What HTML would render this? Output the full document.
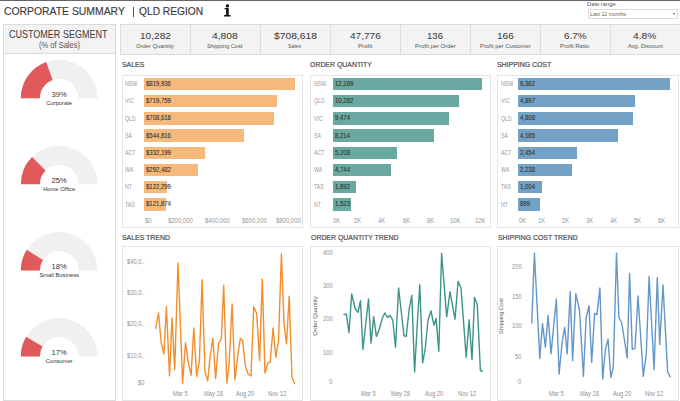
<!DOCTYPE html>
<html><head><meta charset="utf-8"><style>
html,body{margin:0;padding:0;width:680px;height:401px;overflow:hidden;background:#fff;font-family:"Liberation Sans",sans-serif;}
body{position:relative;}
</style></head><body>
<div style="position:absolute;left:0px;top:0px;width:680px;height:1px;background:#666"></div>
<div style="position:absolute;left:4.40px;top:5.52px;font-size:11.19px;line-height:11.19px;white-space:nowrap;color:#3a3a3a;transform:scaleX(0.9287);transform-origin:0 0;-webkit-text-stroke:0.15px #3a3a3a;">CORPORATE SUMMARY</div>
<div style="position:absolute;left:133px;top:6.5px;width:1px;height:10.5px;background:#555"></div>
<div style="position:absolute;left:139.10px;top:5.65px;font-size:11.05px;line-height:11.05px;white-space:nowrap;color:#3a3a3a;transform:scaleX(0.9256);transform-origin:0 0;-webkit-text-stroke:0.15px #3a3a3a;">QLD REGION</div>
<svg style="position:absolute;left:0;top:0" width="240" height="20"><circle cx="227.4" cy="5.9" r="1.7" fill="#111"/><path d="M224.6,8 H228.7 V15 H230.6 V16.4 H224.1 V15 H226.1 V9.2 H224.6 Z" fill="#111"/></svg>
<div style="position:absolute;left:586.60px;top:1.31px;font-size:6.25px;line-height:6.25px;white-space:nowrap;color:#555;transform:scaleX(0.9281);transform-origin:0 0;">Date range</div>
<div style="position:absolute;left:588px;top:9.2px;width:90.4px;height:9.4px;background:#fff;border:1px solid #dadada;box-sizing:border-box"></div>
<div style="position:absolute;left:590.30px;top:11.92px;font-size:5.52px;line-height:5.52px;white-space:nowrap;color:#666;transform:scaleX(0.9532);transform-origin:0 0;">Last 12 months</div>
<div style="position:absolute;left:672.6px;top:13.2px;width:0;height:0;border-left:1.7px solid transparent;border-right:1.7px solid transparent;border-top:2.6px solid #555"></div>
<div style="position:absolute;left:120px;top:24px;width:560px;height:30.5px;background:#f3f3f3;border-top:1px solid #dcdcdc;border-bottom:1px solid #dcdcdc;box-sizing:border-box"></div>
<div style="position:absolute;left:120px;top:24px;width:1px;height:30.5px;background:#dcdcdc"></div>
<div style="position:absolute;left:139.55px;top:31.23px;font-size:9.88px;line-height:9.88px;white-space:nowrap;color:#3c3c3c;transform:scaleX(1.0221);transform-origin:0 0;-webkit-text-stroke:0.05px #3c3c3c;">10,282</div>
<div style="position:absolute;left:135.95px;top:44.08px;font-size:5.81px;line-height:5.81px;white-space:nowrap;color:#555;transform:scaleX(0.9992);transform-origin:0 0;">Order Quantity</div>
<div style="position:absolute;left:190px;top:24px;width:1px;height:30.5px;background:#dcdcdc"></div>
<div style="position:absolute;left:212.10px;top:31.23px;font-size:9.88px;line-height:9.88px;white-space:nowrap;color:#3c3c3c;transform:scaleX(1.0431);transform-origin:0 0;-webkit-text-stroke:0.05px #3c3c3c;">4,808</div>
<div style="position:absolute;left:207.30px;top:44.08px;font-size:5.81px;line-height:5.81px;white-space:nowrap;color:#555;transform:scaleX(0.9779);transform-origin:0 0;">Shipping Cost</div>
<div style="position:absolute;left:260px;top:24px;width:1px;height:30.5px;background:#dcdcdc"></div>
<div style="position:absolute;left:273.55px;top:31.23px;font-size:9.88px;line-height:9.88px;white-space:nowrap;color:#3c3c3c;transform:scaleX(1.0406);transform-origin:0 0;-webkit-text-stroke:0.05px #3c3c3c;">$708,618</div>
<div style="position:absolute;left:288.40px;top:44.08px;font-size:5.81px;line-height:5.81px;white-space:nowrap;color:#555;transform:scaleX(0.9076);transform-origin:0 0;">Sales</div>
<div style="position:absolute;left:330px;top:24px;width:1px;height:30.5px;background:#dcdcdc"></div>
<div style="position:absolute;left:349.60px;top:31.23px;font-size:9.88px;line-height:9.88px;white-space:nowrap;color:#3c3c3c;transform:scaleX(1.0188);transform-origin:0 0;-webkit-text-stroke:0.05px #3c3c3c;">47,776</div>
<div style="position:absolute;left:357.80px;top:44.08px;font-size:5.81px;line-height:5.81px;white-space:nowrap;color:#555;transform:scaleX(1.0611);transform-origin:0 0;">Profit</div>
<div style="position:absolute;left:400px;top:24px;width:1px;height:30.5px;background:#dcdcdc"></div>
<div style="position:absolute;left:427.00px;top:31.23px;font-size:9.88px;line-height:9.88px;white-space:nowrap;color:#3c3c3c;transform:scaleX(0.9702);transform-origin:0 0;-webkit-text-stroke:0.05px #3c3c3c;">136</div>
<div style="position:absolute;left:414.60px;top:44.08px;font-size:5.81px;line-height:5.81px;white-space:nowrap;color:#555;transform:scaleX(1.0183);transform-origin:0 0;">Profit per Order</div>
<div style="position:absolute;left:470px;top:24px;width:1px;height:30.5px;background:#dcdcdc"></div>
<div style="position:absolute;left:496.60px;top:31.23px;font-size:9.88px;line-height:9.88px;white-space:nowrap;color:#3c3c3c;transform:scaleX(1.0187);transform-origin:0 0;-webkit-text-stroke:0.05px #3c3c3c;">166</div>
<div style="position:absolute;left:479.60px;top:44.08px;font-size:5.81px;line-height:5.81px;white-space:nowrap;color:#555;transform:scaleX(1.0078);transform-origin:0 0;">Profit per Customer</div>
<div style="position:absolute;left:540px;top:24px;width:1px;height:30.5px;background:#dcdcdc"></div>
<div style="position:absolute;left:563.70px;top:31.23px;font-size:9.88px;line-height:9.88px;white-space:nowrap;color:#3c3c3c;transform:scaleX(1.0032);transform-origin:0 0;-webkit-text-stroke:0.05px #3c3c3c;">6.7%</div>
<div style="position:absolute;left:560.40px;top:44.08px;font-size:5.81px;line-height:5.81px;white-space:nowrap;color:#555;transform:scaleX(1.0153);transform-origin:0 0;">Profit Ratio</div>
<div style="position:absolute;left:610px;top:24px;width:1px;height:30.5px;background:#dcdcdc"></div>
<div style="position:absolute;left:633.40px;top:31.23px;font-size:9.88px;line-height:9.88px;white-space:nowrap;color:#3c3c3c;transform:scaleX(1.0298);transform-origin:0 0;-webkit-text-stroke:0.05px #3c3c3c;">4.8%</div>
<div style="position:absolute;left:627.50px;top:44.08px;font-size:5.81px;line-height:5.81px;white-space:nowrap;color:#555;transform:scaleX(0.9786);transform-origin:0 0;">Avg. Discount</div>
<div style="position:absolute;left:2.5px;top:24px;width:113.5px;height:376.5px;border:1px solid #dcdcdc;box-sizing:border-box;background:#fff"></div>
<div style="position:absolute;left:2.5px;top:24px;width:113.5px;height:29.5px;background:#f3f3f3;border:1px solid #dcdcdc;box-sizing:border-box"></div>
<div style="position:absolute;left:8.50px;top:29.79px;font-size:10.17px;line-height:10.17px;white-space:nowrap;color:#3a3a3a;transform:scaleX(0.8869);transform-origin:0 0;">CUSTOMER SEGMENT</div>
<div style="position:absolute;left:38.80px;top:41.16px;font-size:8.43px;line-height:8.43px;white-space:nowrap;color:#555;transform:scaleX(0.8929);transform-origin:0 0;">(% of Sales)</div>
<svg style="position:absolute;left:0;top:0" width="120" height="401"><path d="M20.800000000000004,98.2 A38.4,38.4 0 0 1 97.6,98.2 L78.5,98.2 A19.3,19.3 0 0 0 39.900000000000006,98.2 Z" fill="#f0f0f0"/><path d="M20.800000000000004,98.2 A38.4,38.4 0 0 1 46.19,62.07 L52.66,80.04 A19.3,19.3 0 0 0 39.900000000000006,98.2 Z" fill="#e05a5c"/><path d="M20.800000000000004,184.2 A38.4,38.4 0 0 1 97.6,184.2 L78.5,184.2 A19.3,19.3 0 0 0 39.900000000000006,184.2 Z" fill="#f0f0f0"/><path d="M20.800000000000004,184.2 A38.4,38.4 0 0 1 32.05,157.05 L45.55,170.55 A19.3,19.3 0 0 0 39.900000000000006,184.2 Z" fill="#e05a5c"/><path d="M20.800000000000004,270.4 A38.4,38.4 0 0 1 97.6,270.4 L78.5,270.4 A19.3,19.3 0 0 0 39.900000000000006,270.4 Z" fill="#f0f0f0"/><path d="M20.800000000000004,270.4 A38.4,38.4 0 0 1 26.78,249.82 L42.90,260.06 A19.3,19.3 0 0 0 39.900000000000006,270.4 Z" fill="#e05a5c"/><path d="M20.800000000000004,356.4 A38.4,38.4 0 0 1 97.6,356.4 L78.5,356.4 A19.3,19.3 0 0 0 39.900000000000006,356.4 Z" fill="#f0f0f0"/><path d="M20.800000000000004,356.4 A38.4,38.4 0 0 1 26.15,336.85 L42.59,346.58 A19.3,19.3 0 0 0 39.900000000000006,356.4 Z" fill="#e05a5c"/></svg>
<div style="position:absolute;left:51.59px;top:91.17px;font-size:7.60px;line-height:7.60px;white-space:nowrap;color:#333;transform:scaleX(1.0000);transform-origin:0 0;">39%</div>
<div style="position:absolute;left:46.30px;top:100.99px;font-size:5.80px;line-height:5.80px;white-space:nowrap;color:#333;transform:scaleX(1.0000);transform-origin:0 0;">Corporate</div>
<div style="position:absolute;left:51.59px;top:177.17px;font-size:7.60px;line-height:7.60px;white-space:nowrap;color:#333;transform:scaleX(1.0000);transform-origin:0 0;">25%</div>
<div style="position:absolute;left:43.14px;top:186.99px;font-size:5.80px;line-height:5.80px;white-space:nowrap;color:#333;transform:scaleX(1.0000);transform-origin:0 0;">Home Office</div>
<div style="position:absolute;left:51.59px;top:263.37px;font-size:7.60px;line-height:7.60px;white-space:nowrap;color:#333;transform:scaleX(1.0000);transform-origin:0 0;">18%</div>
<div style="position:absolute;left:39.38px;top:273.19px;font-size:5.80px;line-height:5.80px;white-space:nowrap;color:#333;transform:scaleX(1.0000);transform-origin:0 0;">Small Business</div>
<div style="position:absolute;left:51.59px;top:349.37px;font-size:7.60px;line-height:7.60px;white-space:nowrap;color:#333;transform:scaleX(1.0000);transform-origin:0 0;">17%</div>
<div style="position:absolute;left:45.82px;top:359.19px;font-size:5.80px;line-height:5.80px;white-space:nowrap;color:#333;transform:scaleX(1.0000);transform-origin:0 0;">Consumer</div>
<div style="position:absolute;left:121.80px;top:60.88px;font-size:7.70px;line-height:7.70px;white-space:nowrap;color:#505050;transform:scaleX(0.9000);transform-origin:0 0;-webkit-text-stroke:0.22px #505050;">SALES</div>
<div style="position:absolute;left:121.5px;top:74.6px;width:181px;height:153.2px;border:1px solid #e4e4e4;box-sizing:border-box"></div>
<div style="position:absolute;left:144.0px;top:77.7px;width:151.0px;height:12.5px;background:#f6b97c"></div>
<div style="position:absolute;left:125.00px;top:81.28px;font-size:6.40px;line-height:6.40px;white-space:nowrap;color:#9a9a9a;transform:scaleX(0.8200);transform-origin:0 0;">NSW</div>
<div style="position:absolute;left:146.00px;top:80.94px;font-size:6.80px;line-height:6.80px;white-space:nowrap;color:#333;transform:scaleX(0.8800);transform-origin:0 0;-webkit-text-stroke:0.1px #333;">$819,936</div>
<div style="position:absolute;left:144.0px;top:94.9px;width:132.55133205518482px;height:12.5px;background:#f6b97c"></div>
<div style="position:absolute;left:125.00px;top:98.48px;font-size:6.40px;line-height:6.40px;white-space:nowrap;color:#9a9a9a;transform:scaleX(0.8200);transform-origin:0 0;">VIC</div>
<div style="position:absolute;left:146.00px;top:98.14px;font-size:6.80px;line-height:6.80px;white-space:nowrap;color:#333;transform:scaleX(0.8800);transform-origin:0 0;-webkit-text-stroke:0.1px #333;">$719,759</div>
<div style="position:absolute;left:144.0px;top:112.1px;width:130.4995975295633px;height:12.5px;background:#f6b97c"></div>
<div style="position:absolute;left:125.00px;top:115.68px;font-size:6.40px;line-height:6.40px;white-space:nowrap;color:#9a9a9a;transform:scaleX(0.8200);transform-origin:0 0;">QLD</div>
<div style="position:absolute;left:146.00px;top:115.34px;font-size:6.80px;line-height:6.80px;white-space:nowrap;color:#333;transform:scaleX(0.8800);transform-origin:0 0;-webkit-text-stroke:0.1px #333;">$708,618</div>
<div style="position:absolute;left:144.0px;top:129.3px;width:100.33370409397807px;height:12.5px;background:#f6b97c"></div>
<div style="position:absolute;left:125.00px;top:132.88px;font-size:6.40px;line-height:6.40px;white-space:nowrap;color:#9a9a9a;transform:scaleX(0.8200);transform-origin:0 0;">SA</div>
<div style="position:absolute;left:146.00px;top:132.54px;font-size:6.80px;line-height:6.80px;white-space:nowrap;color:#333;transform:scaleX(0.8800);transform-origin:0 0;-webkit-text-stroke:0.1px #333;">$544,816</div>
<div style="position:absolute;left:144.0px;top:146.5px;width:61.178005356515634px;height:12.5px;background:#f6b97c"></div>
<div style="position:absolute;left:125.00px;top:150.08px;font-size:6.40px;line-height:6.40px;white-space:nowrap;color:#9a9a9a;transform:scaleX(0.8200);transform-origin:0 0;">ACT</div>
<div style="position:absolute;left:146.00px;top:149.74px;font-size:6.80px;line-height:6.80px;white-space:nowrap;color:#333;transform:scaleX(0.8800);transform-origin:0 0;-webkit-text-stroke:0.1px #333;">$332,199</div>
<div style="position:absolute;left:144.0px;top:163.7px;width:53.863694239550405px;height:12.5px;background:#f6b97c"></div>
<div style="position:absolute;left:125.00px;top:167.28px;font-size:6.40px;line-height:6.40px;white-space:nowrap;color:#9a9a9a;transform:scaleX(0.8200);transform-origin:0 0;">WA</div>
<div style="position:absolute;left:146.00px;top:166.94px;font-size:6.80px;line-height:6.80px;white-space:nowrap;color:#333;transform:scaleX(0.8800);transform-origin:0 0;-webkit-text-stroke:0.1px #333;">$292,482</div>
<div style="position:absolute;left:144.0px;top:180.89999999999998px;width:22.522671281661008px;height:12.5px;background:#f6b97c"></div>
<div style="position:absolute;left:125.00px;top:184.48px;font-size:6.40px;line-height:6.40px;white-space:nowrap;color:#9a9a9a;transform:scaleX(0.8200);transform-origin:0 0;">NT</div>
<div style="position:absolute;left:146.00px;top:184.14px;font-size:6.80px;line-height:6.80px;white-space:nowrap;color:#333;transform:scaleX(0.8800);transform-origin:0 0;-webkit-text-stroke:0.1px #333;">$122,299</div>
<div style="position:absolute;left:144.0px;top:198.1px;width:22.44440297779339px;height:12.5px;background:#f6b97c"></div>
<div style="position:absolute;left:125.00px;top:201.68px;font-size:6.40px;line-height:6.40px;white-space:nowrap;color:#9a9a9a;transform:scaleX(0.8200);transform-origin:0 0;">TAS</div>
<div style="position:absolute;left:146.00px;top:201.34px;font-size:6.80px;line-height:6.80px;white-space:nowrap;color:#333;transform:scaleX(0.8800);transform-origin:0 0;-webkit-text-stroke:0.1px #333;">$121,874</div>
<div style="position:absolute;left:144.50px;top:217.61px;font-size:6.60px;line-height:6.60px;white-space:nowrap;color:#959595;transform:scaleX(0.9000);transform-origin:0 0;">$0</div>
<div style="position:absolute;left:168.44px;top:217.61px;font-size:6.60px;line-height:6.60px;white-space:nowrap;color:#959595;transform:scaleX(0.9000);transform-origin:0 0;">$200,000</div>
<div style="position:absolute;left:205.28px;top:217.61px;font-size:6.60px;line-height:6.60px;white-space:nowrap;color:#959595;transform:scaleX(0.9000);transform-origin:0 0;">$400,000</div>
<div style="position:absolute;left:242.11px;top:217.61px;font-size:6.60px;line-height:6.60px;white-space:nowrap;color:#959595;transform:scaleX(0.9000);transform-origin:0 0;">$600,000</div>
<div style="position:absolute;left:275.72px;top:217.61px;font-size:6.60px;line-height:6.60px;white-space:nowrap;color:#959595;transform:scaleX(0.9000);transform-origin:0 0;">$800,000</div>
<div style="position:absolute;left:310.30px;top:60.88px;font-size:7.70px;line-height:7.70px;white-space:nowrap;color:#505050;transform:scaleX(0.9000);transform-origin:0 0;-webkit-text-stroke:0.22px #505050;">ORDER QUANTITY</div>
<div style="position:absolute;left:310px;top:74.6px;width:181px;height:153.2px;border:1px solid #e4e4e4;box-sizing:border-box"></div>
<div style="position:absolute;left:332.6px;top:77.7px;width:149.8px;height:12.5px;background:#6aa9a2"></div>
<div style="position:absolute;left:313.50px;top:81.28px;font-size:6.40px;line-height:6.40px;white-space:nowrap;color:#9a9a9a;transform:scaleX(0.8200);transform-origin:0 0;">NSW</div>
<div style="position:absolute;left:334.60px;top:80.94px;font-size:6.80px;line-height:6.80px;white-space:nowrap;color:#333;transform:scaleX(0.8800);transform-origin:0 0;-webkit-text-stroke:0.1px #333;">12,169</div>
<div style="position:absolute;left:332.6px;top:94.9px;width:126.57109047579917px;height:12.5px;background:#6aa9a2"></div>
<div style="position:absolute;left:313.50px;top:98.48px;font-size:6.40px;line-height:6.40px;white-space:nowrap;color:#9a9a9a;transform:scaleX(0.8200);transform-origin:0 0;">QLD</div>
<div style="position:absolute;left:334.60px;top:98.14px;font-size:6.80px;line-height:6.80px;white-space:nowrap;color:#333;transform:scaleX(0.8800);transform-origin:0 0;-webkit-text-stroke:0.1px #333;">10,282</div>
<div style="position:absolute;left:332.6px;top:112.1px;width:116.62463637110692px;height:12.5px;background:#6aa9a2"></div>
<div style="position:absolute;left:313.50px;top:115.68px;font-size:6.40px;line-height:6.40px;white-space:nowrap;color:#9a9a9a;transform:scaleX(0.8200);transform-origin:0 0;">VIC</div>
<div style="position:absolute;left:334.60px;top:115.34px;font-size:6.80px;line-height:6.80px;white-space:nowrap;color:#333;transform:scaleX(0.8800);transform-origin:0 0;-webkit-text-stroke:0.1px #333;">9,474</div>
<div style="position:absolute;left:332.6px;top:129.3px;width:101.11407675240365px;height:12.5px;background:#6aa9a2"></div>
<div style="position:absolute;left:313.50px;top:132.88px;font-size:6.40px;line-height:6.40px;white-space:nowrap;color:#9a9a9a;transform:scaleX(0.8200);transform-origin:0 0;">SA</div>
<div style="position:absolute;left:334.60px;top:132.54px;font-size:6.80px;line-height:6.80px;white-space:nowrap;color:#333;transform:scaleX(0.8800);transform-origin:0 0;-webkit-text-stroke:0.1px #333;">8,214</div>
<div style="position:absolute;left:332.6px;top:146.5px;width:64.11031309064015px;height:12.5px;background:#6aa9a2"></div>
<div style="position:absolute;left:313.50px;top:150.08px;font-size:6.40px;line-height:6.40px;white-space:nowrap;color:#9a9a9a;transform:scaleX(0.8200);transform-origin:0 0;">ACT</div>
<div style="position:absolute;left:334.60px;top:149.74px;font-size:6.80px;line-height:6.80px;white-space:nowrap;color:#333;transform:scaleX(0.8800);transform-origin:0 0;-webkit-text-stroke:0.1px #333;">5,208</div>
<div style="position:absolute;left:332.6px;top:163.7px;width:58.39848796121292px;height:12.5px;background:#6aa9a2"></div>
<div style="position:absolute;left:313.50px;top:167.28px;font-size:6.40px;line-height:6.40px;white-space:nowrap;color:#9a9a9a;transform:scaleX(0.8200);transform-origin:0 0;">WA</div>
<div style="position:absolute;left:334.60px;top:166.94px;font-size:6.80px;line-height:6.80px;white-space:nowrap;color:#333;transform:scaleX(0.8800);transform-origin:0 0;-webkit-text-stroke:0.1px #333;">4,744</div>
<div style="position:absolute;left:332.6px;top:180.89999999999998px;width:23.2904593639576px;height:12.5px;background:#6aa9a2"></div>
<div style="position:absolute;left:313.50px;top:184.48px;font-size:6.40px;line-height:6.40px;white-space:nowrap;color:#9a9a9a;transform:scaleX(0.8200);transform-origin:0 0;">TAS</div>
<div style="position:absolute;left:334.60px;top:184.14px;font-size:6.80px;line-height:6.80px;white-space:nowrap;color:#333;transform:scaleX(0.8800);transform-origin:0 0;-webkit-text-stroke:0.1px #333;">1,892</div>
<div style="position:absolute;left:332.6px;top:198.1px;width:18.748081189908785px;height:12.5px;background:#6aa9a2"></div>
<div style="position:absolute;left:313.50px;top:201.68px;font-size:6.40px;line-height:6.40px;white-space:nowrap;color:#9a9a9a;transform:scaleX(0.8200);transform-origin:0 0;">NT</div>
<div style="position:absolute;left:334.60px;top:201.34px;font-size:6.80px;line-height:6.80px;white-space:nowrap;color:#333;transform:scaleX(0.8800);transform-origin:0 0;-webkit-text-stroke:0.1px #333;">1,523</div>
<div style="position:absolute;left:333.10px;top:217.61px;font-size:6.60px;line-height:6.60px;white-space:nowrap;color:#959595;transform:scaleX(0.9000);transform-origin:0 0;">0K</div>
<div style="position:absolute;left:353.59px;top:217.61px;font-size:6.60px;line-height:6.60px;white-space:nowrap;color:#959595;transform:scaleX(0.9000);transform-origin:0 0;">2K</div>
<div style="position:absolute;left:378.21px;top:217.61px;font-size:6.60px;line-height:6.60px;white-space:nowrap;color:#959595;transform:scaleX(0.9000);transform-origin:0 0;">4K</div>
<div style="position:absolute;left:402.83px;top:217.61px;font-size:6.60px;line-height:6.60px;white-space:nowrap;color:#959595;transform:scaleX(0.9000);transform-origin:0 0;">6K</div>
<div style="position:absolute;left:427.45px;top:217.61px;font-size:6.60px;line-height:6.60px;white-space:nowrap;color:#959595;transform:scaleX(0.9000);transform-origin:0 0;">8K</div>
<div style="position:absolute;left:450.41px;top:217.61px;font-size:6.60px;line-height:6.60px;white-space:nowrap;color:#959595;transform:scaleX(0.9000);transform-origin:0 0;">10K</div>
<div style="position:absolute;left:475.03px;top:217.61px;font-size:6.60px;line-height:6.60px;white-space:nowrap;color:#959595;transform:scaleX(0.9000);transform-origin:0 0;">12K</div>
<div style="position:absolute;left:497.30px;top:60.88px;font-size:7.70px;line-height:7.70px;white-space:nowrap;color:#505050;transform:scaleX(0.9000);transform-origin:0 0;-webkit-text-stroke:0.22px #505050;">SHIPPING COST</div>
<div style="position:absolute;left:497px;top:74.6px;width:182px;height:153.2px;border:1px solid #e4e4e4;box-sizing:border-box"></div>
<div style="position:absolute;left:518.0px;top:77.7px;width:152.2px;height:12.5px;background:#74a2c7"></div>
<div style="position:absolute;left:500.50px;top:81.28px;font-size:6.40px;line-height:6.40px;white-space:nowrap;color:#9a9a9a;transform:scaleX(0.8200);transform-origin:0 0;">NSW</div>
<div style="position:absolute;left:520.00px;top:80.94px;font-size:6.80px;line-height:6.80px;white-space:nowrap;color:#333;transform:scaleX(0.8800);transform-origin:0 0;-webkit-text-stroke:0.1px #333;">6,362</div>
<div style="position:absolute;left:518.0px;top:94.9px;width:117.15237346746305px;height:12.5px;background:#74a2c7"></div>
<div style="position:absolute;left:500.50px;top:98.48px;font-size:6.40px;line-height:6.40px;white-space:nowrap;color:#9a9a9a;transform:scaleX(0.8200);transform-origin:0 0;">VIC</div>
<div style="position:absolute;left:520.00px;top:98.14px;font-size:6.80px;line-height:6.80px;white-space:nowrap;color:#333;transform:scaleX(0.8800);transform-origin:0 0;-webkit-text-stroke:0.1px #333;">4,897</div>
<div style="position:absolute;left:518.0px;top:112.1px;width:115.02320025149324px;height:12.5px;background:#74a2c7"></div>
<div style="position:absolute;left:500.50px;top:115.68px;font-size:6.40px;line-height:6.40px;white-space:nowrap;color:#9a9a9a;transform:scaleX(0.8200);transform-origin:0 0;">QLD</div>
<div style="position:absolute;left:520.00px;top:115.34px;font-size:6.80px;line-height:6.80px;white-space:nowrap;color:#333;transform:scaleX(0.8800);transform-origin:0 0;-webkit-text-stroke:0.1px #333;">4,808</div>
<div style="position:absolute;left:518.0px;top:129.3px;width:100.11898773970448px;height:12.5px;background:#74a2c7"></div>
<div style="position:absolute;left:500.50px;top:132.88px;font-size:6.40px;line-height:6.40px;white-space:nowrap;color:#9a9a9a;transform:scaleX(0.8200);transform-origin:0 0;">SA</div>
<div style="position:absolute;left:520.00px;top:132.54px;font-size:6.80px;line-height:6.80px;white-space:nowrap;color:#333;transform:scaleX(0.8800);transform-origin:0 0;-webkit-text-stroke:0.1px #333;">4,185</div>
<div style="position:absolute;left:518.0px;top:146.5px;width:58.70776485381955px;height:12.5px;background:#74a2c7"></div>
<div style="position:absolute;left:500.50px;top:150.08px;font-size:6.40px;line-height:6.40px;white-space:nowrap;color:#9a9a9a;transform:scaleX(0.8200);transform-origin:0 0;">ACT</div>
<div style="position:absolute;left:520.00px;top:149.74px;font-size:6.80px;line-height:6.80px;white-space:nowrap;color:#333;transform:scaleX(0.8800);transform-origin:0 0;-webkit-text-stroke:0.1px #333;">2,454</div>
<div style="position:absolute;left:518.0px;top:163.7px;width:53.540333228544476px;height:12.5px;background:#74a2c7"></div>
<div style="position:absolute;left:500.50px;top:167.28px;font-size:6.40px;line-height:6.40px;white-space:nowrap;color:#9a9a9a;transform:scaleX(0.8200);transform-origin:0 0;">WA</div>
<div style="position:absolute;left:520.00px;top:166.94px;font-size:6.80px;line-height:6.80px;white-space:nowrap;color:#333;transform:scaleX(0.8800);transform-origin:0 0;-webkit-text-stroke:0.1px #333;">2,238</div>
<div style="position:absolute;left:518.0px;top:180.89999999999998px;width:24.018987739704492px;height:12.5px;background:#74a2c7"></div>
<div style="position:absolute;left:500.50px;top:184.48px;font-size:6.40px;line-height:6.40px;white-space:nowrap;color:#9a9a9a;transform:scaleX(0.8200);transform-origin:0 0;">TAS</div>
<div style="position:absolute;left:520.00px;top:184.14px;font-size:6.80px;line-height:6.80px;white-space:nowrap;color:#333;transform:scaleX(0.8800);transform-origin:0 0;-webkit-text-stroke:0.1px #333;">1,004</div>
<div style="position:absolute;left:518.0px;top:198.1px;width:21.507041810751335px;height:12.5px;background:#74a2c7"></div>
<div style="position:absolute;left:500.50px;top:201.68px;font-size:6.40px;line-height:6.40px;white-space:nowrap;color:#9a9a9a;transform:scaleX(0.8200);transform-origin:0 0;">NT</div>
<div style="position:absolute;left:520.00px;top:201.34px;font-size:6.80px;line-height:6.80px;white-space:nowrap;color:#333;transform:scaleX(0.8800);transform-origin:0 0;-webkit-text-stroke:0.1px #333;">899</div>
<div style="position:absolute;left:518.50px;top:217.61px;font-size:6.60px;line-height:6.60px;white-space:nowrap;color:#959595;transform:scaleX(0.9000);transform-origin:0 0;">0K</div>
<div style="position:absolute;left:538.29px;top:217.61px;font-size:6.60px;line-height:6.60px;white-space:nowrap;color:#959595;transform:scaleX(0.9000);transform-origin:0 0;">1K</div>
<div style="position:absolute;left:562.21px;top:217.61px;font-size:6.60px;line-height:6.60px;white-space:nowrap;color:#959595;transform:scaleX(0.9000);transform-origin:0 0;">2K</div>
<div style="position:absolute;left:586.14px;top:217.61px;font-size:6.60px;line-height:6.60px;white-space:nowrap;color:#959595;transform:scaleX(0.9000);transform-origin:0 0;">3K</div>
<div style="position:absolute;left:610.06px;top:217.61px;font-size:6.60px;line-height:6.60px;white-space:nowrap;color:#959595;transform:scaleX(0.9000);transform-origin:0 0;">4K</div>
<div style="position:absolute;left:633.98px;top:217.61px;font-size:6.60px;line-height:6.60px;white-space:nowrap;color:#959595;transform:scaleX(0.9000);transform-origin:0 0;">5K</div>
<div style="position:absolute;left:657.91px;top:217.61px;font-size:6.60px;line-height:6.60px;white-space:nowrap;color:#959595;transform:scaleX(0.9000);transform-origin:0 0;">6K</div>
<div style="position:absolute;left:122.00px;top:233.58px;font-size:7.70px;line-height:7.70px;white-space:nowrap;color:#505050;transform:scaleX(0.9000);transform-origin:0 0;-webkit-text-stroke:0.22px #505050;">SALES TREND</div>
<div style="position:absolute;left:121.5px;top:246.0px;width:181px;height:155.0px;border:1px solid #e4e4e4;box-sizing:border-box"></div>
<div style="position:absolute;left:310.50px;top:233.58px;font-size:7.70px;line-height:7.70px;white-space:nowrap;color:#505050;transform:scaleX(0.9000);transform-origin:0 0;-webkit-text-stroke:0.22px #505050;">ORDER QUANTITY TREND</div>
<div style="position:absolute;left:310px;top:246.0px;width:181px;height:155.0px;border:1px solid #e4e4e4;box-sizing:border-box"></div>
<div style="position:absolute;left:497.50px;top:233.58px;font-size:7.70px;line-height:7.70px;white-space:nowrap;color:#505050;transform:scaleX(0.9000);transform-origin:0 0;-webkit-text-stroke:0.22px #505050;">SHIPPING COST TREND</div>
<div style="position:absolute;left:497px;top:246.0px;width:182px;height:155.0px;border:1px solid #e4e4e4;box-sizing:border-box"></div>
<svg style="position:absolute;left:0;top:0" width="680" height="401"><polyline points="155.6,329.2 158.5,313 161.2,342.7 163.9,353.9 166.4,306.7 169.5,375.9 172,318 174.7,369.6 178,263 182.6,383.5 185.5,342.7 188.2,361.8 191.1,375.2 193.8,328 196.7,376.4 199.4,360.6 202.1,279.8 205,371.9 207.7,380.8 210.2,356.1 212.9,338.2 215.6,378.6 218.5,343.8 221.4,338.2 223.7,285.3 226.8,383.1 229,365.1 232.1,304 234.9,379.7 237.6,357.3 240.3,338.2 242.7,340.4 245.4,366.2 248.1,374.1 251,375.9 253.7,306.7 256.7,313.5 259.6,360.6 262.3,279.1 265,373 267.9,362.9 270.1,362.4 273.1,328 275.8,357.3 278.5,341.5 281.4,254 284.1,324.7 286.5,343.8 289.2,296.3 292,377.5 294.8,384.2" fill="none" stroke="#f28e2b" stroke-width="1.4" stroke-linejoin="round"/><polyline points="343.4,314.6 346.3,313.9 349,332.6 351.7,294 355.3,309 358,312.4 360.5,300.6 362.9,349.4 368.5,299 371,343.1 373.7,316.8 376.4,336.4 379.3,329.2 382.2,318.4 384.9,313 387.6,317.5 389.9,315.3 392.8,320.2 395.5,347.2 398.6,288 404,335.9 406.2,336.4 409.2,309 411.8,295.3 414.6,371.9 417.5,320.2 419.8,284.7 422.6,362.9 425.3,348.3 428,320.2 431,310.8 433.9,325.2 436.1,318.4 438.8,351.2 441.6,253.4 446.7,316.8 450,291.8 455,319.1 458.1,281.4 461,288 466.2,357.3 469.1,319.8 472,359.5 474.5,297.5 477.3,304.6 480.4,370.7 483,371.4" fill="none" stroke="#3d948a" stroke-width="1.4" stroke-linejoin="round"/><polyline points="531.7,323.6 534.4,253.3 539.8,358.4 542.5,323.6 545.4,347.2 548.1,315.3 551,353.9 556.3,299 559.1,374.1 562.1,342.7 564.7,327.4 567.2,353.9 570.2,291.5 572.6,360.6 575.8,293.7 579.5,310 583.4,376.4 586.1,318 589,305.6 591.7,362.4 594.6,313.5 596.9,314.6 599.9,288 602.7,379 605.4,349.4 608.1,339.3 610.8,377.5 613.3,367.4 616.5,253.3 618.9,317.5 621.6,322.5 624.5,340.4 627.2,357.9 629.6,273.2 632.3,349.4 635,348.3 638,295.9 643.3,376.4 646.3,353.9 649.1,276.5 654.1,369.6 657.3,277.6 659.7,344.5 663,284.9 667.6,371.4 670.5,377.5" fill="none" stroke="#6497c9" stroke-width="1.4" stroke-linejoin="round"/></svg>
<div style="position:absolute;left:126.60px;top:257.60px;font-size:7.20px;line-height:7.20px;white-space:nowrap;color:#8f8f8f;transform:scaleX(0.8000);transform-origin:0 0;">$40,0..</div>
<div style="position:absolute;left:126.60px;top:289.00px;font-size:7.20px;line-height:7.20px;white-space:nowrap;color:#8f8f8f;transform:scaleX(0.8000);transform-origin:0 0;">$30,0..</div>
<div style="position:absolute;left:126.60px;top:319.70px;font-size:7.20px;line-height:7.20px;white-space:nowrap;color:#8f8f8f;transform:scaleX(0.8000);transform-origin:0 0;">$20,0..</div>
<div style="position:absolute;left:126.60px;top:351.60px;font-size:7.20px;line-height:7.20px;white-space:nowrap;color:#8f8f8f;transform:scaleX(0.8000);transform-origin:0 0;">$10,0..</div>
<div style="position:absolute;left:138.19px;top:378.50px;font-size:7.20px;line-height:7.20px;white-space:nowrap;color:#8f8f8f;transform:scaleX(0.8000);transform-origin:0 0;">$0</div>
<div style="position:absolute;left:322.99px;top:249.20px;font-size:7.20px;line-height:7.20px;white-space:nowrap;color:#8f8f8f;transform:scaleX(0.8000);transform-origin:0 0;">400</div>
<div style="position:absolute;left:322.99px;top:282.30px;font-size:7.20px;line-height:7.20px;white-space:nowrap;color:#8f8f8f;transform:scaleX(0.8000);transform-origin:0 0;">300</div>
<div style="position:absolute;left:322.99px;top:315.40px;font-size:7.20px;line-height:7.20px;white-space:nowrap;color:#8f8f8f;transform:scaleX(0.8000);transform-origin:0 0;">200</div>
<div style="position:absolute;left:322.99px;top:348.90px;font-size:7.20px;line-height:7.20px;white-space:nowrap;color:#8f8f8f;transform:scaleX(0.8000);transform-origin:0 0;">100</div>
<div style="position:absolute;left:329.40px;top:378.10px;font-size:7.20px;line-height:7.20px;white-space:nowrap;color:#8f8f8f;transform:scaleX(0.8000);transform-origin:0 0;">0</div>
<div style="position:absolute;left:511.69px;top:263.10px;font-size:7.20px;line-height:7.20px;white-space:nowrap;color:#8f8f8f;transform:scaleX(0.8000);transform-origin:0 0;">200</div>
<div style="position:absolute;left:511.69px;top:293.10px;font-size:7.20px;line-height:7.20px;white-space:nowrap;color:#8f8f8f;transform:scaleX(0.8000);transform-origin:0 0;">150</div>
<div style="position:absolute;left:511.69px;top:322.20px;font-size:7.20px;line-height:7.20px;white-space:nowrap;color:#8f8f8f;transform:scaleX(0.8000);transform-origin:0 0;">100</div>
<div style="position:absolute;left:514.89px;top:352.90px;font-size:7.20px;line-height:7.20px;white-space:nowrap;color:#8f8f8f;transform:scaleX(0.8000);transform-origin:0 0;">50</div>
<div style="position:absolute;left:518.10px;top:378.10px;font-size:7.20px;line-height:7.20px;white-space:nowrap;color:#8f8f8f;transform:scaleX(0.8000);transform-origin:0 0;">0</div>
<div style="position:absolute;left:314.8px;top:315.6px;font-size:6.0px;line-height:6.0px;color:#555;white-space:nowrap;transform:translate(-50%,-50%) rotate(-90deg)">Order Quantity</div>
<div style="position:absolute;left:502.4px;top:315.5px;font-size:5.75px;line-height:5.75px;color:#555;white-space:nowrap;transform:translate(-50%,-50%) rotate(-90deg)">Shipping Cost</div>
<div style="position:absolute;left:172.84px;top:389.80px;font-size:7.20px;line-height:7.20px;white-space:nowrap;color:#8f8f8f;transform:scaleX(0.8000);transform-origin:0 0;">Mar 5</div>
<div style="position:absolute;left:203.56px;top:389.80px;font-size:7.20px;line-height:7.20px;white-space:nowrap;color:#8f8f8f;transform:scaleX(0.8000);transform-origin:0 0;">May 28</div>
<div style="position:absolute;left:235.87px;top:389.80px;font-size:7.20px;line-height:7.20px;white-space:nowrap;color:#8f8f8f;transform:scaleX(0.8000);transform-origin:0 0;">Aug 20</div>
<div style="position:absolute;left:268.37px;top:389.80px;font-size:7.20px;line-height:7.20px;white-space:nowrap;color:#8f8f8f;transform:scaleX(0.8000);transform-origin:0 0;">Nov 12</div>
<div style="position:absolute;left:360.64px;top:389.80px;font-size:7.20px;line-height:7.20px;white-space:nowrap;color:#8f8f8f;transform:scaleX(0.8000);transform-origin:0 0;">Mar 5</div>
<div style="position:absolute;left:391.46px;top:389.80px;font-size:7.20px;line-height:7.20px;white-space:nowrap;color:#8f8f8f;transform:scaleX(0.8000);transform-origin:0 0;">May 28</div>
<div style="position:absolute;left:424.67px;top:389.80px;font-size:7.20px;line-height:7.20px;white-space:nowrap;color:#8f8f8f;transform:scaleX(0.8000);transform-origin:0 0;">Aug 20</div>
<div style="position:absolute;left:457.57px;top:389.80px;font-size:7.20px;line-height:7.20px;white-space:nowrap;color:#8f8f8f;transform:scaleX(0.8000);transform-origin:0 0;">Nov 12</div>
<div style="position:absolute;left:548.84px;top:389.80px;font-size:7.20px;line-height:7.20px;white-space:nowrap;color:#8f8f8f;transform:scaleX(0.8000);transform-origin:0 0;">Mar 5</div>
<div style="position:absolute;left:579.66px;top:389.80px;font-size:7.20px;line-height:7.20px;white-space:nowrap;color:#8f8f8f;transform:scaleX(0.8000);transform-origin:0 0;">May 28</div>
<div style="position:absolute;left:612.97px;top:389.80px;font-size:7.20px;line-height:7.20px;white-space:nowrap;color:#8f8f8f;transform:scaleX(0.8000);transform-origin:0 0;">Aug 20</div>
<div style="position:absolute;left:645.07px;top:389.80px;font-size:7.20px;line-height:7.20px;white-space:nowrap;color:#8f8f8f;transform:scaleX(0.8000);transform-origin:0 0;">Nov 12</div>
</body></html>
